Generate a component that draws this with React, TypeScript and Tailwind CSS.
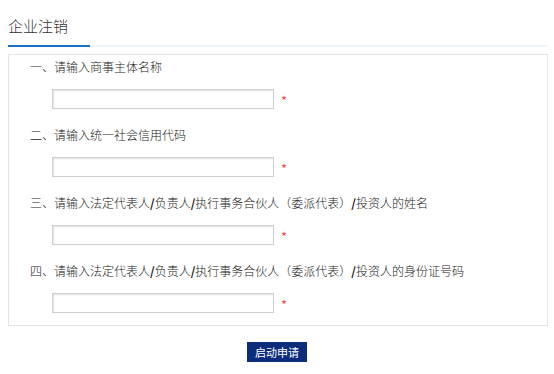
import React from 'react'

const fields = [
  '一、请输入商事主体名称',
  '二、请输入统一社会信用代码',
  '三、请输入法定代表人/负责人/执行事务合伙人（委派代表）/投资人的姓名',
  '四、请输入法定代表人/负责人/执行事务合伙人（委派代表）/投资人的身份证号码',
]

// slashes look bold in the reference
const renderLabel = (text: string) =>
  text.split('/').map((part, i) => (
    <React.Fragment key={i}>
      {i > 0 && <span className="font-bold">/</span>}
      {part}
    </React.Fragment>
  ))

const App = () => {
  return (
    <div className="min-h-[374px] w-[554px] bg-white text-[#222] font-light font-['Microsoft_YaHei','Noto_Sans_CJK_SC',sans-serif]">
      <div className="ml-2 w-[540px] pt-4">
        <div className="text-[15px] leading-5 text-[#333]">企业注销</div>
        <div className="mt-[9px] flex h-[2px] bg-[#eef5fb]">
          <div className="w-[82px] bg-[#1a6fc9]"></div>
        </div>
        <div className="mt-[7px] border border-[#e3e3e3] pt-[2px] pb-3">
          {fields.map((label, i) => (
            <div key={i} className={i < fields.length - 1 ? 'mb-4' : ''}>
              <div className="pl-[21px] text-[12px] leading-5 whitespace-nowrap">{renderLabel(label)}</div>
              <div className="mt-3 flex items-center pl-[43px]">
                <input
                  type="text"
                  className="h-5 w-[222px] border border-[#cfcfcf] bg-white shadow-[inset_1px_1px_2px_rgba(0,0,0,0.12)] outline-none"
                />
                <span className="ml-[7px] mt-[3px] text-[13px] font-normal leading-none text-[#f0504a]">*</span>
              </div>
            </div>
          ))}
        </div>
      </div>
      <div className="mt-4 flex justify-center">
        <button
          type="button"
          className="h-5 w-[60px] bg-[#0b2d7c] text-[11px] font-normal leading-5 text-white"
        >
          启动申请
        </button>
      </div>
    </div>
  )
}

export default App
